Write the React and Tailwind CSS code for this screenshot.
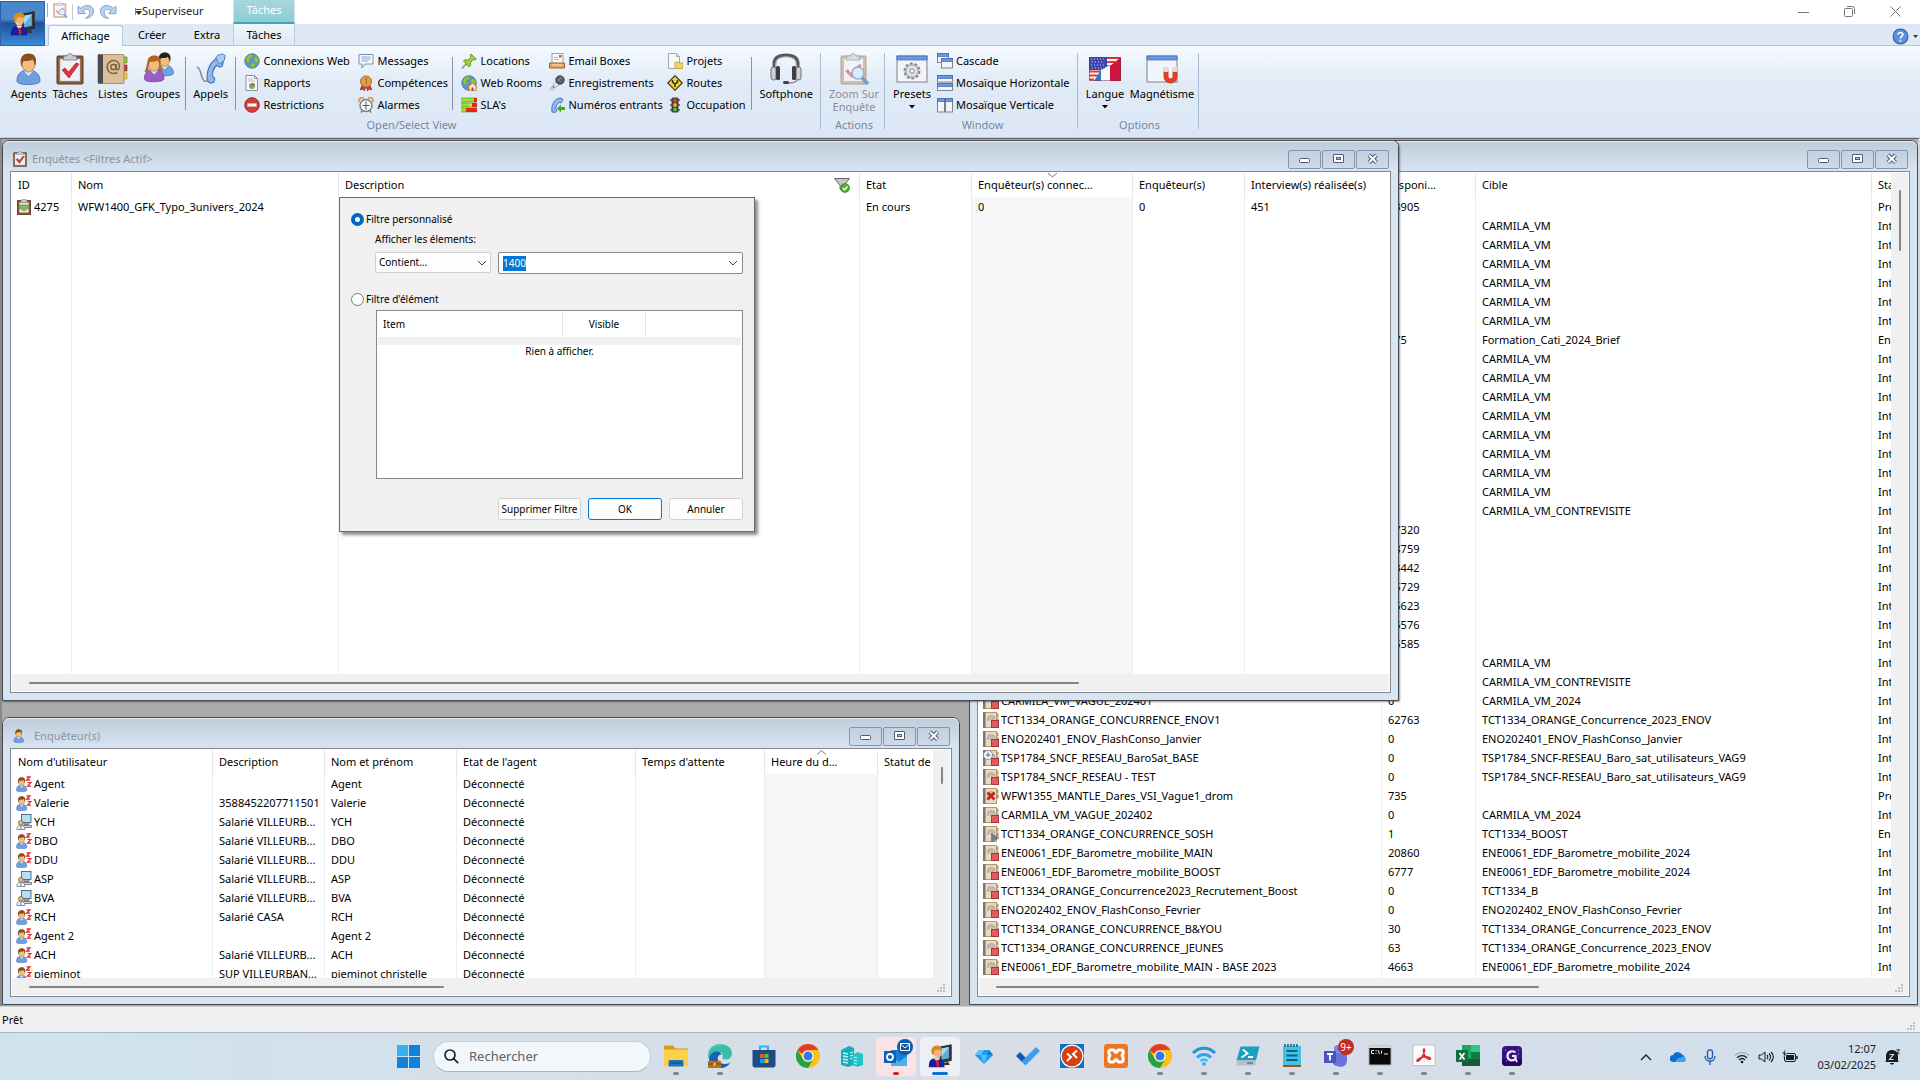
import React, { useState } from 'react';

/* ---------- Icons ---------- */

function Svg({ size = 16, box = 16, className = "", children }) {
  return (
    <svg width={size} height={size} viewBox={`0 0 ${box} ${box}`} fill="none" className={`shrink-0 ${className}`} aria-hidden="true">
      {children}
    </svg>
  );
}

function PersonShape({ body = "#6f9fe0", dark = "#3c68ae", hair = "#8a4f1a" }) {
  return (
    <>
      <path d="M4 28c0-7 4-11 11-11s12 4 12 11c0 2-5 3.500-12 3.500S4 30 4 28z" fill={body} stroke={dark} strokeWidth="0.8" />
      <path d="M11 18l4.500 5L20 18z" fill="#dce9fb" />
      <path d="M8.500 9c0-5 3-7.500 7-7.500s7 2.500 7 7.500-3 10-7 10-7-5-7-10z" fill="#f0bd7c" stroke="#a86b2a" strokeWidth="0.7" />
      <path d="M7.800 11C6.500 3.500 11 .5 15.500.5c5 0 8.500 3 7.200 9.500-.4 2-1.200 2.500-1.200 2.500 0-3-1-5-2-6-3 2-7 1.500-8.500 1.500-1.500 1-1.700 2-1.700 5.500 0 0-1.200-.5-1.500-2z" fill={hair} />
    </>
  );
}

const AgentIcon = ({ size = 32 }) => <Svg size={size} box={32}><PersonShape /></Svg>;

const ClipboardIcon = ({ size = 32 }) => (
  <Svg size={size} box={32}>
    <rect x="3" y="3" width="26" height="28" rx="1" fill="#8c5a35" stroke="#5d3a20" />
    <rect x="6" y="6" width="20" height="22" fill="#eef0f4" stroke="#b9bcc4" strokeWidth="0.6" />
    <path d="M10 3h3c0-3 6-3 6 0h3l1 4H9z" fill="#c9ccd1" stroke="#777b82" strokeWidth="0.8" />
    <path d="M8 17l3-2 3.500 4L22 10l3 1-10 14z" fill="#d8363c" stroke="#8e1a20" strokeWidth="0.6" />
  </Svg>
);

const BookIcon = () => (
  <Svg size={32} box={32}>
    <rect x="24" y="4" width="6" height="6" fill="#8ec63a" stroke="#4f7c14" strokeWidth="0.6" />
    <rect x="24" y="12" width="6" height="6" fill="#d23a3a" stroke="#861a1a" strokeWidth="0.6" />
    <rect x="24" y="20" width="6" height="6" fill="#f3cf48" stroke="#a9851a" strokeWidth="0.6" />
    <rect x="1" y="1.500" width="26" height="29" rx="1" fill="#dcbf98" stroke="#9a7c55" strokeWidth="0.8" />
    <rect x="1" y="1.500" width="5" height="29" fill="#4b4b4d" />
    <circle cx="16.500" cy="14" r="2.600" stroke="#7d6040" strokeWidth="1.500" />
    <path d="M19.200 11v4.300c0 2.200 3.300 2 3.300-1.300 0-4-2.700-6.500-6-6.500s-6.300 2.700-6.300 6.500 2.800 6.500 6.300 6.500c1.500 0 2.700-.3 3.800-1" stroke="#7d6040" strokeWidth="1.500" />
  </Svg>
);

const GroupIcon = () => (
  <Svg size={34} box={34}>
    <g transform="translate(12 0) scale(.76)"><PersonShape body="#6f9fe0" hair="#222" /></g>
    <g transform="translate(0 3) scale(.85)">
      <PersonShape body="#9a5cc6" dark="#6a3392" hair="#b5641e" />
      <path d="M8 8c-2 5-2 9-4 12 3 0 5-1 5-3zM22 8c2 5 1 9 4 12-3 0-5-1-5-3z" fill="#b5641e" />
    </g>
  </Svg>
);

const CallIcon = () => (
  <Svg size={32} box={34}>
    <path d="M2 15c5 0 4 15 9 15h7" stroke="#8e9196" strokeWidth="1.800" />
    <path d="M13 29C12 17 17 8 25 5l5 4-1 5-3 1-3-2c-3 3-5 8-4 12l2 2-1 4-4 1z" fill="#8db9ee" stroke="#4272b6" strokeWidth="1.200" />
    <path d="M22 5c2-4 9-5 10-2l-1 5-5 4z" fill="#a9cdf5" stroke="#4272b6" strokeWidth="1" />
  </Svg>
);

const HeadsetIcon = () => (
  <Svg size={32} box={32}>
    <path d="M4 18V11C4 4 9 2 16 2s12 2 12 9v7" stroke="#55585d" strokeWidth="3" />
    <path d="M6 15V11c0-5 4-7 10-7s10 2 10 7v4" stroke="#a9acb0" strokeWidth="1" />
    <rect x="1" y="14" width="5" height="13" rx="2.500" fill="#cfd1d4" stroke="#6b6e72" />
    <rect x="6" y="13" width="4" height="14" rx="1.500" fill="#3c3e42" />
    <rect x="26" y="14" width="5" height="13" rx="2.500" fill="#cfd1d4" stroke="#6b6e72" />
    <rect x="22" y="13" width="4" height="14" rx="1.500" fill="#3c3e42" />
    <path d="M27 27c-1 3-5 3-9 3" stroke="#888b90" strokeWidth="1.400" />
    <rect x="13" y="28" width="6" height="3" rx="1.500" fill="#3f4145" />
  </Svg>
);

const ZoomSurveyIcon = ({ size = 32 }) => (
  <Svg size={size} box={32} className="opacity-70">
    <rect x="3" y="3" width="25" height="28" rx="1" fill="#c9ab8c" stroke="#9d8166" />
    <rect x="6" y="6" width="19" height="22" fill="#f3f4f7" />
    <path d="M9 3h3c0-3 6-3 6 0h3l1 4H8z" fill="#cfd2d6" stroke="#85888d" strokeWidth="0.8" />
    <path d="M7 18l3-2 3 4 8-9 3 1-10 13z" fill="#e0666a" />
    <circle cx="20" cy="20" r="6" fill="#d5eafc" stroke="#7691ac" strokeWidth="1.600" />
    <path d="M24 25l6 6" stroke="#4f7db5" strokeWidth="3.500" />
  </Svg>
);

function WindowShape({ x, y, w, h, bar = 3 }) {
  return (
    <>
      <rect x={x} y={y} width={w} height={h} fill="#f2f4f8" stroke="#6f7682" strokeWidth="0.9" />
      <rect x={x} y={y} width={w} height={bar} fill="#6a98e2" stroke="#3c68b4" strokeWidth="0.7" />
    </>
  );
}

const PresetsIcon = () => (
  <Svg size={32} box={32}>
    <WindowShape x={1} y={3} w={30} h={26} bar={4} />
    <circle cx="16" cy="18" r="7.500" stroke="#858585" strokeWidth="2" strokeDasharray="2.900 1.810" />
    <circle cx="16" cy="18" r="6.200" fill="#e1e3e6" stroke="#8c8f94" />
    <circle cx="16" cy="18" r="2.200" fill="#fff" stroke="#7c7f84" />
  </Svg>
);

const FlagIcon = () => (
  <Svg size={32} box={32}>
    <rect y="4" width="32" height="24" fill="#f4f4f6" />
    <path d="M17 5h14M17 9h9M0 18.500h12M0 22.500h9M0 26.500h5M17 13h5" stroke="#e23b3b" strokeWidth="2.200" />
    <rect y="4" width="18" height="13" fill="#3d47a8" />
    <path d="M2 6h14M3 9h12M2 12h14M3 15h12" stroke="#c9cdf2" strokeWidth="1" strokeDasharray="1 2" />
    <path d="M5 28L12 17v11z" fill="#2a77c6" />
    <path d="M12 17l9-5v16h-9z" fill="#f6f7fa" />
    <path d="M21 13L32 4v24H21z" fill="#cb1740" />
    <rect x="0.500" y="4.500" width="31" height="23" stroke="#7a2a40" strokeOpacity=".5" />
  </Svg>
);

const MagnetIcon = () => (
  <Svg size={32} box={32}>
    <WindowShape x={1} y={3} w={30} h={26} bar={4} />
    <path d="M20 17v6.500a4.500 4.500 0 009 0V17" stroke="#d8421c" strokeWidth="5" />
    <path d="M20 14v5M29 14v5" stroke="#d9dbe0" strokeWidth="5" />
  </Svg>
);

const GlobeShape = () => (
  <>
    <circle cx="8" cy="8" r="7.300" fill="#5b93dc" stroke="#4f6f96" strokeWidth="0.700" />
    <path d="M2 5c2-4 6-4 7-3L8 4.500 5.500 6 6 9l-2 1-2-2zM9.500 5l3-2 2.500 4-1 3-2.500-1L10 7.500zM6.500 11l3-1.500 2 2-1.500 3.500-2.500-.5z" fill="#8fc83c" stroke="#568a1e" strokeWidth="0.400" />
  </>
);

const smallIcons = {
  globe: <GlobeShape />,
  report: (
    <>
      <path d="M2 .5h8.500l3 3v12H2z" fill="#f7f8fa" stroke="#8e939b" />
      <path d="M10.500.5v3h3" stroke="#8e939b" />
      <path d="M4 4h5M4 6h7" stroke="#b4b9c0" />
      <circle cx="8" cy="11" r="3" fill="#5a9de0" />
      <path d="M8 11V8a3 3 0 013 3z" fill="#e2503a" />
      <path d="M8 11h3a3 3 0 01-3 3z" fill="#8ac43a" />
    </>
  ),
  deny: (
    <>
      <circle cx="8" cy="8" r="7.300" fill="#d2403c" stroke="#8e2522" strokeWidth="0.900" />
      <rect x="3.500" y="6.500" width="9" height="3" fill="#fff" />
    </>
  ),
  message: (
    <>
      <path d="M1 1.500h14v9.500H7l-3 4v-4H1z" fill="#f5f9ff" stroke="#7d8ea5" />
      <path d="M3.500 4h9M3.500 6h9M3.500 8h7" stroke="#7ea8dc" />
    </>
  ),
  medal: (
    <>
      <path d="M4.500 9L2 15l3-.8L6.500 16 8 11l1.500 5 1.500-1.800 3 .8-2.500-6z" fill="#d03434" stroke="#8e1c1c" strokeWidth="0.500" />
      <circle cx="8" cy="6.500" r="5.500" fill="#dfa04a" stroke="#a46c22" />
      <path d="M7 4.500l1.200-.8v5.600" stroke="#a46c22" strokeWidth="1.200" />
    </>
  ),
  alarm: (
    <>
      <path d="M1 5a3.500 3.500 0 015-4M15 5a3.500 3.500 0 00-5-4" stroke="#dca53c" strokeWidth="2" />
      <path d="M3 15.500l1.500-2M13 15.500l-1.500-2" stroke="#777" strokeWidth="1.400" />
      <circle cx="8" cy="8.500" r="6" fill="#f6f8fb" stroke="#767b84" strokeWidth="1.400" />
      <path d="M8 4.500v8M4.500 8.500h7" stroke="#555" />
    </>
  ),
  pin: (
    <>
      <path d="M6 10L.8 15.500" stroke="#888" strokeWidth="1.400" />
      <path d="M10 1l5.300 5-2 1-1.300-.3-2.500 3 .2 3L8 14 2.500 7.800l1.500-1 3 .3 2.800-2.800L9 3z" fill="#9bd238" stroke="#54861a" strokeWidth="0.800" />
    </>
  ),
  webroom: (
    <>
      <GlobeShape />
      <path d="M7 12l4.500-4 4.500 4-1 .5V16H8v-3.500z" fill="#f4e9dc" stroke="#d86a20" />
      <rect x="10.500" y="12.500" width="2" height="3.500" fill="#8e5422" />
    </>
  ),
  sla: (
    <>
      <path d="M0 3h13M0 8h8M0 13h5" stroke="#9be22a" strokeWidth="4" />
      <path d="M13 3h3M11 8h5M5 13h11" stroke="#f0201c" strokeWidth="4" />
      <path d="M8 8h3" stroke="#ffd21c" strokeWidth="4" />
      <path d="M.3 1h15.400M.3 5h15.400M.3 6h15.400M.3 10h15.400M.3 11h15.400M.3 15h15.400" stroke="#39791a" strokeWidth="0.500" />
    </>
  ),
  email: (
    <>
      <rect x="3" y="0.500" width="11" height="10" fill="#fafbfd" stroke="#9a9fa8" />
      <path d="M5 4.500h4M5 6.500h5" stroke="#b9bec6" />
      <rect x="10" y="2" width="2.500" height="2.500" fill="#d84444" />
      <path d="M.5 10h15v5H.5z" fill="#e2a368" stroke="#9c622c" />
      <path d="M3 12h10" stroke="#fbe2c8" />
    </>
  ),
  mic: (
    <>
      <path d="M8.500 5.500l3 3L3 15l-2-1z" fill="#ececf0" stroke="#84888f" strokeWidth="0.700" />
      <circle cx="11" cy="5" r="4.300" fill="#55585e" stroke="#303237" strokeWidth="0.700" />
      <path d="M8.500 3.500l4 4M10.500 2l4 4M8.500 6.500l5-5" stroke="#a5a8ad" strokeWidth="0.600" />
      <circle cx="4.500" cy="12" r="0.900" fill="#d83030" />
    </>
  ),
  incoming: (
    <>
      <path d="M3 15C2 9 4 4 9 1.500l3.500-.5 1.500 2-2 3-2-.5C7.500 7.500 6.500 10 7 12l1 1-1.500 2.500z" fill="#8db9ee" stroke="#4272b6" strokeWidth="0.900" />
      <path d="M8 11.500l4-4v2.500h4v3h-4v2.500z" fill="#49a81e" />
    </>
  ),
  project: (
    <>
      <path d="M1.500.5h8l3 3v12h-11z" fill="#f7f8fa" stroke="#a2a7af" />
      <path d="M9.500.5v3h3" stroke="#a2a7af" />
      <path d="M8 9h3l1 1h4v5.500H8z" fill="#f6d264" stroke="#c29a30" strokeWidth="0.700" />
    </>
  ),
  route: (
    <>
      <path d="M8 .7L15.300 8 8 15.300.7 8z" fill="#f6cf30" stroke="#2e2a12" strokeWidth="1.100" />
      <path d="M5.500 5v2.200L8 9l2.500-1.800V5M8 9v3" stroke="#2e2a12" strokeWidth="1.500" />
    </>
  ),
  traffic: (
    <>
      <path d="M3 3h10M3 8h10M3 13h10" stroke="#555" strokeWidth="1.600" />
      <rect x="4.500" y="0.500" width="7" height="15" rx="1.500" fill="#3e4043" />
      <circle cx="8" cy="3.500" r="1.900" fill="#ee3a28" />
      <circle cx="8" cy="8" r="1.900" fill="#f0b42a" />
      <circle cx="8" cy="12.500" r="1.900" fill="#4fc43a" />
    </>
  ),
  cascade: (
    <>
      <WindowShape x={0.500} y={0.500} w={11} h={9} />
      <WindowShape x={4.500} y={5.500} w={11} h={9.500} />
    </>
  ),
  horizontal: (
    <>
      <WindowShape x={0.500} y={0.500} w={15} h={6.500} />
      <WindowShape x={0.500} y={8.500} w={15} h={7} />
    </>
  ),
  vertical: (
    <>
      <WindowShape x={0.500} y={1.500} w={7} h={13.500} />
      <WindowShape x={8.500} y={1.500} w={7} h={13.500} />
    </>
  ),
};

// Rows of the survey list: a small address book with a status mark on top
function ListIcon({ status = "stop" }) {
  return (
    <Svg>
      <rect x="13" y="1.500" width="2.500" height="4" fill="#8cb84a" />
      <rect x="13" y="6.500" width="2.500" height="4" fill="#d86a5a" />
      <rect x="1" y="0.500" width="12.500" height="15" fill="#ead9bd" stroke="#b39a74" />
      <rect x="0" y="0" width="2.500" height="16" fill="#77777a" />
      <path d="M5 9V6.500a3.300 3.300 0 016.500 0v1" stroke="#a39d94" strokeWidth="1.200" />
      <circle cx="8.300" cy="6.800" r="1.300" stroke="#a39d94" />
      {status === "stop" && <rect x="8.500" y="8.500" width="7" height="7" fill="#dc5f60" stroke="#b03238" />}
      {status === "play" && <path d="M8.500 7.500l7.500 4.500-7.500 4z" fill="#7b7b7b" stroke="#5c5c5c" strokeWidth="0.500" />}
      {status === "error" && <path d="M4.500 4.500l7 7M11.500 4.500l-7 7" stroke="#c8201c" strokeWidth="2.800" />}
      {status === "clock" && (
        <>
          <rect x="8.500" y="8.500" width="7" height="7" fill="#dc5f60" stroke="#b03238" />
          <circle cx="5" cy="5" r="4.500" fill="#f3f6fb" stroke="#8a93a6" />
          <path d="M5 2.500V5h2.500M5 5v2M3 5h2" stroke="#555" strokeWidth="0.900" />
        </>
      )}
    </Svg>
  );
}

const AwayIcon = () => (
  <Svg>
    <g transform="translate(-1.500 1) scale(.46 .47)"><PersonShape /></g>
    <path d="M10.500.8h3.500l-3.500 3.400H14M11.500 6.500H15l-3.500 3.700H15" stroke="#e8202c" strokeWidth="1.200" />
  </Svg>
);

const DeskIcon = () => (
  <Svg>
    <rect x="5.500" y="0.500" width="9.500" height="8" fill="#b4e0f6" stroke="#3e4f63" strokeWidth="0.800" />
    <path d="M8 9h5v1.500H8zM6 11.500h9.500v2H6z" fill="#d6dade" stroke="#5d6670" strokeWidth="0.800" />
    <circle cx="4.800" cy="8.800" r="2.300" fill="#f0bd7c" stroke="#8a4f1a" strokeWidth="0.800" />
    <path d="M.8 15.500c0-3 1.500-4.200 4-4.200s4 1.200 4 4.200z" fill="#f4f6f9" stroke="#6e7680" strokeWidth="0.800" />
    <path d="M4.800 12v3" stroke="#3f78c8" />
  </Svg>
);

const SurveyRowIcon = () => (
  <Svg>
    <rect x="1.500" y="1.500" width="13" height="14" fill="#8c5a35" stroke="#6a4426" />
    <rect x="3.500" y="3.500" width="9" height="10" fill="#eef0f0" />
    <path d="M5 1h1.500c0-1.300 3-1.300 3 0H11v2.500H5z" fill="#c4c7cc" stroke="#777b82" strokeWidth="0.600" />
    <path d="M4 6h8c.5 2.500-.3 4.500-2.500 5L8 12l-1.500-1C4.300 10.500 3.500 8.500 4 6z" fill="#83bf5e" stroke="#4c8430" strokeWidth="0.700" />
  </Svg>
);

const FunnelIcon = () => (
  <Svg>
    <path d="M.5 1.500h15L10 8.500V14l-4-2V8.500z" fill="#c3c7cb" stroke="#63676c" />
    <circle cx="11" cy="11" r="4.500" fill="#4fae2a" stroke="#2f7a14" strokeWidth="0.600" />
    <path d="M8.800 11l1.700 1.700 3-3.300" stroke="#fff" strokeWidth="1.500" />
  </Svg>
);

function SupervisorIcon({ size = 24 }) {
  return (
    <Svg size={size} box={32}>
      <path d="M16 4l15-3v21l-15 3z" fill="#33373c" stroke="#15171a" />
      <path d="M18 6l10-2v15l-10 2z" fill="#5fb0d8" />
      <path d="M18 6l10-2-10 13z" fill="#a5dcf2" />
      <path d="M22 25l5-1 2 4h-9z" fill="#33373c" />
      <path d="M1 31c0-8 2-12 10-12s11 4 11 12z" fill="#16209c" />
      <path d="M8 19l4 5 4-5z" fill="#f3f5fa" />
      <path d="M11 21h3l1 9h-4z" fill="#d8222a" />
      <path d="M6 11c0-4 2-7 6-7s6 3 6 7-2 8-6 8-6-4-6-8z" fill="#f3b676" />
      <path d="M5 13C3 6 7 2 12 2s7 3 6.500 7C15 8 12 7 10 8c-2 1-2 3-2 7z" fill="#d98a1e" />
      <path d="M7 14c1 3 3 3 5 3" stroke="#e8e8ec" strokeWidth="1.200" />
    </Svg>
  );
}

const Chevron = ({ className = "" }) => (
  <Svg size={10} box={10} className={className}><path d="M1 3l4 4 4-4" stroke="#444" /></Svg>
);

const SizeGrip = ({ className = "" }) => (
  <Svg size={9} box={9} className={className}>
    <path d="M6 0h2v2H6zM3 3h2v2H3zM6 3h2v2H6zM0 6h2v2H0zM3 6h2v2H3zM6 6h2v2H6z" fill="#bcbcbc" />
  </Svg>
);

/* ---------- Header and ribbon ---------- */

function TitleArea() {
  return (
    <header className="flex bg-white">
      <button aria-label="Menu" className="mt-px flex w-[45px] items-center justify-center border border-[#2c5fae] bg-linear-to-b from-[#4a87ca] from-40% via-[#1d5298] via-50% to-[#3d8bd6]">
        <SupervisorIcon size={25} />
      </button>
      <div className="flex grow flex-col">
        <div className="flex h-6">
          <div className="flex w-[188px] items-center">
            <span className="ml-0.5 -mt-1 h-[14px] w-px bg-[#a8a8a8]" />
            <button aria-label="Zoom" className="-mt-1 ml-1"><ZoomSurveyIcon size={16} /></button>
            <span className="ml-1 h-4 w-px bg-[#c8c8c8]" />
            <button aria-label="Annuler la saisie" className="-mt-0.5 ml-1">
              <Svg size={17}><path d="M1 3v7h7L5.500 7.500C9 4.500 12 6 12 9c0 2.500-2 4-4 5.500 5-.5 7.500-3 7.500-7C15.500 2 8.500.5 3.500 5z" fill="#b8d2f2" stroke="#7ba1d4" strokeWidth="0.900" /></Svg>
            </button>
            <button aria-label="Rétablir" className="-mt-0.5 ml-1.5">
              <Svg size={17}><path d="M15 3v7H8l2.500-2.500C7 4.500 4 6 4 9c0 2.500 2 4 4 5.500C3 14 .5 11.500.5 7.500.5 2 7.500.5 12.500 5z" fill="#b8d2f2" stroke="#7ba1d4" strokeWidth="0.900" /></Svg>
            </button>
            <button aria-label="Personnaliser" className="-mt-0.5 ml-[18px]">
              <Svg size={7} box={7}><path d="M.5 0v7" stroke="#555" strokeWidth="0.700" /><path d="M1 1.500h5.500M1 3.500h5.500L3.800 6.500z" stroke="#222" strokeWidth="0.800" fill="#222" /></Svg>
            </button>
            <h1 className="-mt-0.5 text-[11px] text-[#222]">Superviseur</h1>
          </div>
          <div className="w-[62px] border-x border-b-2 border-x-[#cfe4ea] border-b-[#3da9b8] bg-linear-to-b from-[#a4d8dc] to-[#8fcdd4] pt-0.5 text-center text-[11px] text-white">Tâches</div>
          <div className="mr-0.5 ml-auto flex h-[22px] items-center text-[#777]">
            <button aria-label="Réduire" className="flex w-[46px] justify-center"><Svg size={11} box={11}><path d="M0 6.500h11" stroke="currentColor" /></Svg></button>
            <button aria-label="Restaurer" className="flex w-[46px] justify-center"><Svg size={11} box={11}><rect x="0.500" y="2.500" width="8" height="8" rx="1" stroke="currentColor" /><path d="M3 .5h5.500a2 2 0 012 2V8" stroke="currentColor" /></Svg></button>
            <button aria-label="Fermer" className="flex w-[46px] justify-center"><Svg size={11} box={11}><path d="M.5.500l10 10M10.500.500l-10 10" stroke="currentColor" /></Svg></button>
          </div>
        </div>
        <nav className="flex h-[22px] items-end border-b border-[#b4c7db] bg-[#dfe9f5] text-[11px]">
          <button className="-mb-px ml-[3px] h-[21px] w-[75px] rounded-t-[3px] border border-b-0 border-[#b4c7db] bg-[#f6fafe]">Affichage</button>
          <button className="h-[21px] w-[58px] pt-0.5">Créer</button>
          <button className="h-[21px] w-[52px] pt-0.5">Extra</button>
          <button className="h-[21px] w-[62px] border-x border-[#b9cbdc] bg-linear-to-b from-[#edf6fa] to-[#dfe9f5] pt-0.5">Tâches</button>
          <button aria-label="Aide" className="mr-0.5 ml-auto flex items-center gap-1">
            <Svg size={17}>
              <circle cx="8" cy="8" r="7" fill="#5b8fdc" stroke="#2d5ba6" />
              <path d="M5.800 6.200C6 3.500 10.300 3.700 10.200 6.200 10 7.800 8 7.700 8 9.800M8 11v1.600" stroke="#fff" strokeWidth="1.500" />
            </Svg>
            <Svg size={5} box={5}><path d="M0 1h5L2.500 4z" fill="#333" /></Svg>
          </button>
        </nav>
      </div>
    </header>
  );
}

function BigButton({ icon, label, width, arrow, disabled }) {
  return (
    <button disabled={disabled} className={`flex flex-col items-center pt-[3px] ${width} ${disabled ? "text-[#8b8f98]" : ""}`}>
      <span className="flex h-[32px] items-center">{icon}</span>
      <span className="mt-0.5 text-center leading-[13px]">{label}</span>
      {arrow && <Svg size={6} box={6} className="mt-1"><path d="M0 1h6L3 4.500z" fill="#000" /></Svg>}
    </button>
  );
}

function SmallColumn({ items, width }) {
  return (
    <div className={`flex shrink-0 flex-col ${width}`}>
      {items.map(([icon, label]) => (
        <button key={label} className="flex h-[22px] items-center gap-[3px] whitespace-nowrap">
          <Svg>{smallIcons[icon]}</Svg>
          {label}
        </button>
      ))}
    </div>
  );
}

const InnerSep = () => <span className="mt-[7px] h-[53px] w-px shrink-0 bg-[#8b94a3]" />;

function RibbonGroup({ title, width, children }) {
  return (
    <>
      <section className={`flex shrink-0 flex-col pt-1 ${width}`}>
        <div className="flex h-[67px]">{children}</div>
        <h2 className="pl-[3px] text-center leading-4 text-[#7587a0]">{title}</h2>
      </section>
      <span className="mt-[7px] h-[76px] w-px shrink-0 bg-[#a9bbd2]" />
    </>
  );
}

function Ribbon() {
  return (
    <div className="flex h-[92px] border-b border-[#c3cfdf] bg-linear-to-b from-[#f5fafe] via-[#e1ebf7] via-40% to-[#dce7f6] text-[11px]">
      <RibbonGroup title="Open/Select View" width="w-[820px]">
        <BigButton icon={<AgentIcon />} label="Agents" width="ml-2 w-[42px]" />
        <BigButton icon={<ClipboardIcon />} label="Tâches" width="w-[41px]" />
        <BigButton icon={<BookIcon />} label="Listes" width="w-[45px]" />
        <BigButton icon={<GroupIcon />} label="Groupes" width="mr-1 w-[46px]" />
        <InnerSep />
        <BigButton icon={<CallIcon />} label="Appels" width="w-[50px]" />
        <InnerSep />
        <SmallColumn width="ml-2 w-[114px]" items={[["globe", "Connexions Web"], ["report", "Rapports"], ["deny", "Restrictions"]]} />
        <SmallColumn width="w-[94px]" items={[["message", "Messages"], ["medal", "Compétences"], ["alarm", "Alarmes"]]} />
        <InnerSep />
        <SmallColumn width="ml-2 w-[88px]" items={[["pin", "Locations"], ["webroom", "Web Rooms"], ["sla", "SLA's"]]} />
        <SmallColumn width="w-[118px]" items={[["email", "Email Boxes"], ["mic", "Enregistrements"], ["incoming", "Numéros entrants"]]} />
        <SmallColumn width="w-[84px]" items={[["project", "Projets"], ["route", "Routes"], ["traffic", "Occupation"]]} />
        <InnerSep />
        <BigButton icon={<HeadsetIcon />} label="Softphone" width="w-[68px]" />
      </RibbonGroup>
      <RibbonGroup title="Actions" width="w-[63px]">
        <BigButton disabled icon={<ZoomSurveyIcon />} label={<>Zoom Sur<br />Enquête</>} width="w-full pl-[3px]" />
      </RibbonGroup>
      <RibbonGroup title="Window" width="w-[192px]">
        <BigButton arrow icon={<PresetsIcon />} label="Presets" width="w-[52px] pl-0.5" />
        <SmallColumn width="" items={[["cascade", "Cascade"], ["horizontal", "Mosaïque Horizontale"], ["vertical", "Mosaïque Verticale"]]} />
      </RibbonGroup>
      <RibbonGroup title="Options" width="w-[120px]">
        <BigButton arrow icon={<FlagIcon />} label="Langue" width="ml-[5px] w-[44px]" />
        <BigButton icon={<MagnetIcon />} label="Magnétisme" width="w-[70px]" />
      </RibbonGroup>
    </div>
  );
}

/* ---------- Child windows ---------- */

function WindowButtons() {
  const button = "flex h-[19px] w-[33px] items-center justify-center rounded-[2px] border border-[#8494b0] bg-linear-to-b from-[#c3d0df] to-[#cddaea]";
  return (
    <div className="ml-auto flex gap-px">
      <button aria-label="Réduire" className={button}>
        <Svg size={12} box={12}><rect x="0.500" y="5.500" width="10" height="4" rx="1" fill="#fff" stroke="#555b6b" /></Svg>
      </button>
      <button aria-label="Agrandir" className={button}>
        <Svg size={12} box={12}><rect x="0.500" y="1.500" width="10" height="8" rx="0.500" fill="#fff" stroke="#555b6b" /><rect x="3.500" y="4.500" width="4" height="2" fill="#b8c6d8" stroke="#555b6b" /></Svg>
      </button>
      <button aria-label="Fermer" className={button}>
        <Svg size={12} box={12}>
          <path d="M2 2l7.500 7.500M9.500 2L2 9.500" stroke="#555b6b" strokeWidth="4" />
          <path d="M2.200 2.200l7.100 7.100M9.300 2.200l-7.100 7.100" stroke="#fff" strokeWidth="2" />
        </Svg>
      </button>
    </div>
  );
}

function ChildWindow({ icon, title, className, children }) {
  return (
    <section className={`absolute flex flex-col rounded-t-[7px] border border-[#474a50] bg-[#d7e4f2] px-[7px] pb-[7px] ${className}`}>
      <div className="-mx-[7px] flex h-[30px] shrink-0 items-center rounded-t-[6px] border-t border-[#e8f0f8] bg-linear-to-b from-[#bfcddb] to-[#d7e4f2] px-[9px] pt-[5px]">
        {icon}
        <h2 className="ml-1 text-[11px] text-[#8d949c]">{title}</h2>
        <WindowButtons />
      </div>
      <div className="flex min-h-0 grow flex-col overflow-hidden border border-[#828790] bg-white p-px">
        {children}
      </div>
    </section>
  );
}

function HorizontalScroll({ thumb, grip }) {
  return (
    <div className="flex h-[17px] shrink-0 items-center justify-between bg-[#f0f0f0] pr-1 pl-[17px]">
      <span className={`h-0.5 rounded-full bg-[#858585] ${thumb}`} />
      {grip && <SizeGrip className="mt-1" />}
    </div>
  );
}

function VerticalScroll({ thumb }) {
  return (
    <div className="flex w-[17px] shrink-0 justify-center bg-[#f0f0f0] pt-[17px]">
      <span className={`w-0.5 rounded-full bg-[#858585] ${thumb}`} />
    </div>
  );
}

// columns: [{ title, width, sort, filter }]
function DataTable({ label, columns, rows }) {
  return (
    <div className="min-w-0 grow overflow-hidden">
      <table aria-label={label} className="h-full w-full table-fixed border-separate border-spacing-0 text-left text-[11px] leading-[18px] whitespace-nowrap">
        <colgroup>
          {columns.map((c, i) => <col key={i} className={c.width} />)}
        </colgroup>
        <thead>
          <tr className="h-6">
            {columns.map((c, i) => (
              <th key={i} className="relative overflow-hidden border-r border-[#e5e5e5] pt-0 pb-px pl-1.5 font-normal last:border-r-0">
                {c.sort && (
                  <Svg size={9} box={9} className="absolute top-0 left-1/2 -ml-1">
                    <path d={c.sort === "down" ? "M0 0l4.500 4L9 0" : "M0 4.500L4.500.500 9 4.500"} stroke="#777" />
                  </Svg>
                )}
                <span className="flex items-center justify-between">{c.title}{c.filter && <span className="pr-[9px]"><FunnelIcon /></span>}</span>
              </th>
            ))}
          </tr>
        </thead>
        <tbody>
          {rows.map((row, r) => (
            <tr key={r} className="h-[19px]">
              {row.map((cell, i) => (
                <td key={i} className={`overflow-hidden border-r border-[#e8f0fb] py-0 last:border-r-0 ${i === 0 && Array.isArray(cell) ? "pl-1" : "pl-1.5"} ${columns[i].sort ? "bg-[#f6f6f6]" : ""}`}>
                  {Array.isArray(cell)
                    ? <span className="flex h-[18px] items-center gap-0.5">{cell[0]}{cell[1]}</span>
                    : cell}
                </td>
              ))}
            </tr>
          ))}
          <tr>
            {columns.map((c, i) => (
              <td key={i} className={`border-r border-[#e8f0fb] p-0 last:border-r-0 ${c.sort ? "bg-[#f6f6f6]" : ""}`} />
            ))}
          </tr>
        </tbody>
      </table>
    </div>
  );
}

const surveyColumns = [
  { title: "ID", width: "w-[60px]" },
  { title: "Nom", width: "w-[267px]" },
  { title: "Description", width: "w-[521px]", filter: true },
  { title: "Etat", width: "w-[112px]" },
  { title: "Enquêteur(s) connec...", width: "w-[161px]", sort: "down" },
  { title: "Enquêteur(s)", width: "w-[112px]" },
  { title: "Interview(s) réalisée(s)", width: "" },
];
const surveyRows = [
  [[<SurveyRowIcon key="i" />, "4275"], "WFW1400_GFK_Typo_3univers_2024", "", "En cours", "0", "0", "451"],
];

const agentColumns = [
  { title: "Nom d'utilisateur", width: "w-[201px]" },
  { title: "Description", width: "w-[112px]" },
  { title: "Nom et prénom", width: "w-[132px]" },
  { title: "Etat de l'agent", width: "w-[179px]" },
  { title: "Temps d'attente", width: "w-[129px]" },
  { title: "Heure du d...", width: "w-[113px]", sort: "up" },
  { title: "Statut de", width: "" },
];
const agents = [
  ["Agent", "", "Agent"],
  ["Valerie", "3588452207711501", "Valerie"],
  ["YCH", "Salarié VILLEURB...", "YCH", true],
  ["DBO", "Salarié VILLEURB...", "DBO"],
  ["DDU", "Salarié VILLEURB...", "DDU"],
  ["ASP", "Salarié VILLEURB...", "ASP", true],
  ["BVA", "Salarié VILLEURB...", "BVA", true],
  ["RCH", "Salarié CASA", "RCH"],
  ["Agent 2", "", "Agent 2"],
  ["ACH", "Salarié VILLEURB...", "ACH"],
  ["pieminot", "SUP VILLEURBAN...", "pieminot christelle"],
];
const agentRows = agents.map(([login, description, name, desk]) => [
  [desk ? <DeskIcon key="i" /> : <AwayIcon key="i" />, login], description, name, "Déconnecté", "", "", "",
]);

const listColumns = [
  { title: "", width: "w-[403px]" },
  { title: "Disponi...", width: "w-[94px]" },
  { title: "Cible", width: "w-[396px]" },
  { title: "Sta", width: "" },
];
const carmila = (n) => Array.from({ length: n }, () => ["", "", "CARMILA_VM", "Int"]);
const lists = [
  ["", "13905", "", "Pré"],
  ...carmila(6),
  ["", "175", "Formation_Cati_2024_Brief", "En"],
  ...carmila(8),
  ["", "", "CARMILA_VM_CONTREVISITE", "Int"],
  ...["17320", "18759", "13442", "15729", "15623", "15576", "15585"].map((n) => ["", n, "", "Int"]),
  ...carmila(1),
  ["", "", "CARMILA_VM_CONTREVISITE", "Int"],
  ["CARMILA_VM_VAGUE_202401", "0", "CARMILA_VM_2024", "Int"],
  ["TCT1334_ORANGE_CONCURRENCE_ENOV1", "62763", "TCT1334_ORANGE_Concurrence_2023_ENOV", "Int"],
  ["ENO202401_ENOV_FlashConso_Janvier", "0", "ENO202401_ENOV_FlashConso_Janvier", "Int"],
  ["TSP1784_SNCF_RESEAU_BaroSat_BASE", "0", "TSP1784_SNCF-RESEAU_Baro_sat_utilisateurs_VAG9", "Int", "clock"],
  ["TSP1784_SNCF_RESEAU - TEST", "0", "TSP1784_SNCF-RESEAU_Baro_sat_utilisateurs_VAG9", "Int"],
  ["WFW1355_MANTLE_Dares_VSI_Vague1_drom", "735", "", "Pré", "error"],
  ["CARMILA_VM_VAGUE_202402", "0", "CARMILA_VM_2024", "Int"],
  ["TCT1334_ORANGE_CONCURRENCE_SOSH", "1", "TCT1334_BOOST", "En", "play"],
  ["ENE0061_EDF_Barometre_mobilite_MAIN", "20860", "ENE0061_EDF_Barometre_mobilite_2024", "Int"],
  ["ENE0061_EDF_Barometre_mobilite_BOOST", "6777", "ENE0061_EDF_Barometre_mobilite_2024", "Int"],
  ["TCT1334_ORANGE_Concurrence2023_Recrutement_Boost", "0", "TCT1334_B", "Int"],
  ["ENO202402_ENOV_FlashConso_Fevrier", "0", "ENO202402_ENOV_FlashConso_Fevrier", "Int"],
  ["TCT1334_ORANGE_CONCURRENCE_B&YOU", "30", "TCT1334_ORANGE_Concurrence_2023_ENOV", "Int"],
  ["TCT1334_ORANGE_CONCURRENCE_JEUNES", "63", "TCT1334_ORANGE_Concurrence_2023_ENOV", "Int"],
  ["ENE0061_EDF_Barometre_mobilite_MAIN - BASE 2023", "4663", "ENE0061_EDF_Barometre_mobilite_2024", "Int"],
  ["", "", "", ""],
];
const listRows = lists.map(([name, count, target, state, status]) => [
  [<ListIcon key="i" status={status} />, name], count, target, state,
]);

function FilterPopup() {
  const [mode, setMode] = useState("custom");
  const [value, setValue] = useState("1400");
  const radio = "size-[13px] appearance-none rounded-full border border-[#7a7a7a] bg-white checked:border-4 checked:border-[#0067c0]";
  const button = "h-[22px] rounded-[3px] border bg-[#fdfdfd]";

  return (
    <form
      className="absolute top-[59px] left-[339px] flex w-[416px] flex-col border border-[#6b6b6b] bg-[#f0f0f0] px-[11px] pt-[13px] pb-[11px] text-[10px] text-black shadow-[3px_3px_3px_rgba(0,0,0,0.45)]"
      onSubmit={(e) => e.preventDefault()}
    >
      <label className="flex h-4 items-center gap-0.5">
        <input type="radio" name="filter" className={radio} checked={mode === "custom"} onChange={() => setMode("custom")} />
        Filtre personnalisé
      </label>
      <label htmlFor="operator" className="mt-1 ml-6 h-4 leading-4">Afficher les élements:</label>
      <div className="mt-[5px] ml-6 flex gap-[7px]">
        <div className="relative">
          <select id="operator" className="h-[21px] w-[116px] appearance-none rounded-[2px] border border-[#cfcfcf] bg-[#fdfdfd] pl-[3px]">
            <option>Contient...</option>
            <option>Commence par...</option>
          </select>
          <Chevron className="pointer-events-none absolute top-1.5 right-1" />
        </div>
        <div className="flex h-[22px] grow items-center rounded-[2px] border border-[#8a8a8a] bg-white pr-1 pl-1">
          <input
            aria-label="Valeur"
            className="w-full grow outline-none selection:bg-[#0078d7] selection:text-white"
            value={value}
            autoFocus
            onFocus={(e) => e.target.select()}
            onChange={(e) => setValue(e.target.value)}
          />
          <Chevron />
        </div>
      </div>
      <label className="mt-[17px] flex h-4 items-center gap-0.5">
        <input type="radio" name="filter" className={radio} checked={mode === "item"} onChange={() => setMode("item")} />
        Filtre d'élément
      </label>
      <div className="mt-[3px] ml-[25px] h-[169px] border border-[#828790] bg-white p-px">
        <table className="w-full table-fixed border-separate border-spacing-0 text-left">
          <thead>
            <tr className="h-[25px]">
              <th className="w-[185px] border-r border-[#e5e5e5] py-0 pl-[5px] font-normal">Item</th>
              <th className="w-[83px] border-r border-[#e5e5e5] p-0 text-center font-normal">Visible</th>
              <th />
            </tr>
          </thead>
          <tbody>
            <tr><td colSpan={3} className="border-t-8 border-[#f0f0f0] p-0 text-center leading-3">Rien à afficher.</td></tr>
          </tbody>
        </table>
      </div>
      <div className="mt-[19px] flex justify-end gap-[7px]">
        <button type="button" className={`${button} w-[83px] border-[#d0d0d0]`}>Supprimer Filtre</button>
        <button type="submit" className={`${button} w-[74px] border-[#0078d4]`}>OK</button>
        <button type="button" className={`${button} w-[74px] border-[#d0d0d0]`}>Annuler</button>
      </div>
    </form>
  );
}

function Workspace() {
  return (
    <main className="relative grow overflow-hidden border-2 border-t border-r-[#d8d8d8] border-b-0 border-l-[#8a8a8a] border-t-[#606060] bg-[#ababab]">
      <div className="absolute -inset-x-0.5 -top-px bottom-0">
        <ChildWindow title="" icon={null} className="top-0.5 right-0.5 left-[969px] h-[865px]">
          <div className="flex min-h-0 grow">
            <DataTable label="Listes" columns={listColumns} rows={listRows} />
            <VerticalScroll thumb="h-[61px]" />
          </div>
          <HorizontalScroll thumb="w-[543px]" grip />
        </ChildWindow>
        <ChildWindow title="Enquêteur(s)" icon={<span className="mr-1"><AgentIcon size={14} /></span>} className="top-[579px] left-0.5 h-[288px] w-[958px]">
          <div className="flex min-h-0 grow">
            <DataTable label="Enquêteurs" columns={agentColumns} rows={agentRows} />
            <VerticalScroll thumb="h-[17px]" />
          </div>
          <HorizontalScroll thumb="w-[415px]" grip />
        </ChildWindow>
        <ChildWindow title="Enquêtes <Filtres Actif>" icon={<ClipboardIcon size={16} />} className="top-0.5 left-0.5 h-[561px] w-[1397px] shadow-[1px_1px_2px_rgba(0,0,0,0.4)]">
          <div className="flex min-h-0 grow">
            <DataTable label="Enquêtes" columns={surveyColumns} rows={surveyRows} />
          </div>
          <HorizontalScroll thumb="w-[1050px]" />
        </ChildWindow>
        <FilterPopup />
      </div>
    </main>
  );
}

/* ---------- Task bar ---------- */

const ChromeShape = () => (
  <>
    <circle cx="12" cy="12" r="12" fill="#fbc116" />
    <path d="M1.600 6A12 12 0 0122.400 6H12a6 6 0 00-5.600 4z" fill="#e33b2e" />
    <path d="M1.600 6a12 12 0 0010.400 18l5.200-9A6 6 0 016.800 15z" fill="#27a043" />
    <circle cx="12" cy="12" r="5.600" fill="#fff" />
    <circle cx="12" cy="12" r="4.500" fill="#2f7bed" />
  </>
);

const WifiShape = () => (
  <>
    <path d="M1 9c6-6.500 16-6.500 22 0" stroke="#2496d8" strokeWidth="3" />
    <path d="M5 13.500c4-4 10-4 14 0" stroke="#30a8ee" strokeWidth="3" />
    <path d="M8.500 17c2-2 5-2 7 0" stroke="#3cb8fa" strokeWidth="2.600" />
    <circle cx="12" cy="20" r="2" fill="#3cb8fa" />
  </>
);

const tasks = [
  { name: "Explorateur", dot: true, art: <><path d="M0 3c0-1 .5-1.500 1.500-1.500H9l2 3h13V8H0z" fill="#d99a12" /><path d="M0 5.500h24V21c0 1-.5 1.500-1.500 1.500h-21C.5 22.500 0 22 0 21z" fill="#fcd04b" /><path d="M4.500 22.500V18c0-1.500 1-2 2-2h11c1 0 2 .5 2 2v4.500z" fill="#1d72c4" /><path d="M7 19h10" stroke="#104f92" strokeWidth="1.300" /></> },
  { name: "Edge", dot: true, art: <><path d="M0 12C0 4 6 0 12 0c7 0 12 4 12 9.500 0 4-3 6-6.500 6-2.500 0-3.500-1-3-2 1-3-1-5.500-4-5.500C5 8 1 11 0 15z" fill="#37bfa5" /><path d="M2 7C5 0 15-1.500 20 3c-5-2-14-2-18 4z" fill="#4fd0d8" /><path d="M1 14c1-4 4-6.500 8-6.500 2 0 4 1 4.500 3-6 0-5 10 4 9.500 2 0 4-1 5-2-2 4-6 6-10 6C6 24 1 20 1 14z" fill="#1663b6" /><path d="M0 17h13v7H0z" fill="#b8701c" /><path d="M4.500 17v-1.500h4V17M0 20h13" stroke="#7c4408" /><path d="M5.500 19h2v2.500h-2z" fill="#f7d774" /></> },
  { name: "Store", art: <><path d="M8 6V2.500h8V6" stroke="#2fb6ee" strokeWidth="2" /><path d="M.5 6h23v15c0 1.500-1 2.500-2.500 2.500H3C1.500 23.500.5 22.500.5 21z" fill="#1d4b86" /><path d="M8 10h4v4H8z" fill="#f25022" /><path d="M12.500 10h4v4h-4z" fill="#7fba00" /><path d="M8 15h4v4H8z" fill="#00a4ef" /><path d="M12.500 15h4v4h-4z" fill="#ffb900" /></> },
  { name: "Chrome", art: <ChromeShape /> },
  { name: "Serveurs", art: <><path d="M1 6l8-4 5 2v17l-6 2-7-2z" fill="#16aebc" /><path d="M12 11l6-3 5 2v11l-6 2-5-2z" fill="#22c4cc" /><path d="M3 9l5 1M3 12l5 1M3 15l5 1M3 18l5 1M10 9l3-1M10 12l3-1M10 15l2-1M14 13l3 1M14 16l3 1M14 19l3 1" stroke="#bff2f2" strokeWidth="1.300" /></> },
  { name: "Outlook", dot: true, alert: true, art: <><path d="M7 6h16v16H7z" fill="#1a7fd6" /><path d="M7 12l8 6 8-6v10H7z" fill="#49b3f2" /><path d="M0 7h12v12H0z" fill="#0f5fb4" /><circle cx="6" cy="13" r="3" stroke="#fff" strokeWidth="1.800" /></> },
  { name: "Superviseur", active: true, art: null },
  { name: "Diamant", art: <><path d="M7 6h10l4 5-9 9-9-9z" fill="#1d9bf5" /><path d="M7 6h5l-3 5H3zM12 20l-3-9h6z" fill="#55c4fb" /><path d="M17 6l4 5h-6z" fill="#1277d6" /></> },
  { name: "To Do", art: <><path d="M0 12l4-4 6 6-4 4z" fill="#1a54b0" /><path d="M5.500 17.500L20 3l4 4L9.500 21.500z" fill="#3f9df0" /></> },
  { name: "Bureau à distance", art: <><path d="M0 0h24v24H0z" fill="#0b72d4" /><circle cx="12" cy="12" r="11.500" fill="#fff" /><circle cx="12" cy="12" r="10.300" fill="#d5400f" /><path d="M7 9.500l4 3.500-4 4M17 6.500l-4 3.500 4 4" stroke="#fff" strokeWidth="2" /></> },
  { name: "XAMPP", art: <><rect width="24" height="24" rx="3" fill="#ee7420" /><path d="M7 6c-3 0-3 5 0 5.500C4 12 4 18 7 18h2.500c1 0 1-2.500 2.500-2.500s1.500 2.500 2.500 2.500H17c3 0 3-6 0-6.500C20 11 20 6 17 6h-2.500c-1.500 0-1 2.500-2.500 2.500S11 6 9.500 6z" stroke="#fff" strokeWidth="3" /></> },
  { name: "Chrome 2", dot: true, art: <ChromeShape /> },
  { name: "Wi-Fi", dot: true, art: <WifiShape /> },
  { name: "PowerShell", dot: true, art: <><path d="M4.500 2.500h19l-3.500 14H.5z" fill="#1aa0bd" /><path d="M1 16.500h19l-1 5H0z" fill="#b7c0c6" /><path d="M7 5.500l4.500 4-6 4M12 13h5" stroke="#fff" strokeWidth="1.800" /><path d="M11 19h6" stroke="#48525a" /></> },
  { name: "Bloc-notes", dot: true, art: <><path d="M3 2h18v19H3z" fill="#42c3e6" /><path d="M3 21h18v2H3z" fill="#a5541a" /><path d="M5 0v3M8 0v3M11 0v3M14 0v3M17 0v3" stroke="#175f80" strokeWidth="1.500" /><path d="M6.500 7h11M6.500 11.500h11M6.500 16h11" stroke="#0f5d85" strokeWidth="1.800" /></> },
  { name: "Teams", dot: true, badge: "9+", art: <><circle cx="14" cy="5" r="4" fill="#7b83eb" /><path d="M8 9h15v8a6 6 0 01-8 5.500c-4 0-7-3-7-6z" fill="#6a72dc" /><path d="M0 7h12v12H0z" fill="#4b53bc" /><path d="M3 10h6M6 10v6.500" stroke="#fff" strokeWidth="1.800" /></> },
  { name: "Invite de commandes", dot: true, art: <><path d="M1 2h22v19H1z" fill="#0a0a0a" stroke="#a7adb3" /><path d="M1 3h22" stroke="#d5d9dd" strokeWidth="2" /><path d="M6 6.500H3.500v3H6M8 6v1.500M8 9v1M10 6l1.500 4M13.500 6.500v3M16 10h4" stroke="#eee" /></> },
  { name: "Acrobat", dot: true, art: <><path d="M1 1h22v20.500H1z" fill="#fbfbfb" stroke="#c3c3c3" /><path d="M12 5c1.500 0 0 5-2 8-2 3-4 4.500-5 4-.5-1.500 3-3.500 7-4 4-.5 7 .5 6.500 2-1 1-4-.5-5.500-3-1.500-2.500-2-7-1-7z" stroke="#e22424" strokeWidth="1.500" /></> },
  { name: "Excel", dot: true, art: <><path d="M6 1h18v21H6z" fill="#21a366" /><path d="M15 1h9v7h-9z" fill="#33c481" /><path d="M6 15h18v7H6z" fill="#185c37" /><path d="M15 8h9v7h-9z" fill="#107c41" /><path d="M0 6h12v12H0z" fill="#0f703b" /><path d="M3.500 9l5 6.500M8.500 9l-5 6.500" stroke="#fff" strokeWidth="1.800" /></> },
  { name: "Greenshot", dot: true, art: <><rect x="2" y="2" width="20" height="20" rx="4" fill="#3a1180" /><path d="M2 15h20v3a4 4 0 01-4 4H6a4 4 0 01-4-4z" fill="#220660" /><path d="M15.500 8.500c-3-2.500-8-1-8 3.500s5 5.500 8 3V12H12" stroke="#f1e8ff" strokeWidth="2.200" /><path d="M15 14l2 4" stroke="#f1e8ff" strokeWidth="1.800" /><path d="M5 6h1M18 6h1M18 10h1M6 17h1" stroke="#c8a4ff" /></> },
];

function TaskButton({ task }) {
  return (
    <button aria-label={task.name} className="flex w-11 justify-center">
      <span className={`relative flex h-[39px] w-10 flex-col items-center rounded-[4px] pt-[7px] ${task.active ? "bg-[#ecf0f5]" : ""} ${task.alert ? "bg-[#fbe3e5]" : ""}`}>
        {task.active ? <SupervisorIcon size={24} /> : <Svg size={24} box={24}>{task.art}</Svg>}
        {task.dot && <span className={`mt-[4px] h-[3px] w-1.5 rounded-full ${task.alert ? "bg-[#c42b1c]" : "bg-[#7d868f]"}`} />}
        {task.active && <span className="mt-[4px] h-[3px] w-4 rounded-full bg-[#0a72d0]" />}
        {task.badge && <span className="absolute top-0.5 right-0.5 size-4 rounded-full bg-[#c42b1c] text-center text-[10px] leading-4 text-white">{task.badge}</span>}
        {task.alert && (
          <span className="absolute top-0.5 right-[3px] flex size-4 items-center justify-center rounded-full bg-[#0b5cad]">
            <Svg size={10} box={10}><path d="M.5 1.500h9v7h-9zM.5 2l4.500 4 4.500-4" stroke="#fff" /></Svg>
          </span>
        )}
      </span>
    </button>
  );
}

function TaskBar() {
  return (
    <footer className="grid h-12 shrink-0 grid-cols-[1fr_auto_1fr] border-t border-[#abb6c3] bg-linear-to-r from-[#cfe3ee] via-[#d9dde6] via-55% to-[#d0e0ec]">
      <div />
      <div className="flex items-center">
        <button aria-label="Démarrer" className="flex w-11 justify-center">
          <Svg size={23} box={23}><path d="M0 0h11v11H0zM12 0h11v11H12zM0 12h11v11H0zM12 12h11v11H12z" fill="#0f83dc" /><path d="M0 0h11v11H0z" fill="#35b0f2" /></Svg>
        </button>
        <label className="mx-[3px] flex h-[31px] w-[218px] items-center gap-2.5 rounded-full border border-[#c3d0dd] border-b-[#a9b6c4] bg-[#f2f7fb] pl-2.5">
          <Svg size={15} box={15}><circle cx="6" cy="6" r="5" stroke="#222" strokeWidth="1.700" /><path d="M9.700 9.700l4.500 4.500" stroke="#222" strokeWidth="1.700" /></Svg>
          <input type="search" aria-label="Rechercher" placeholder="Rechercher" className="w-full text-[13px] outline-none placeholder:text-[#5b6066]" />
        </label>
        {tasks.map((t) => <TaskButton key={t.name} task={t} />)}
      </div>
      <div className="flex items-center justify-end pr-5 text-[#1c1c1c]">
        <Svg size={12} box={12}><path d="M1 9l5-5 5 5" stroke="currentColor" strokeWidth="1.400" /></Svg>
        <Svg size={16} className="ml-[18px]"><path d="M3.500 13a3.500 3.500 0 01-.5-7 5 5 0 019-.5 4 4 0 01.5 7.500z" fill="#0f6cc9" /><path d="M5 13c2-4 6-5 8.500-5.500 3 .5 3.500 5.500-.5 5.500z" fill="#33a9ee" /></Svg>
        <Svg size={16} className="ml-4"><rect x="5.500" y="0.800" width="5" height="9" rx="2.500" stroke="#1f57a8" strokeWidth="1.300" /><path d="M3 7c0 7 10 7 10 0M8 12.500V16" stroke="#1f57a8" strokeWidth="1.300" /></Svg>
        <Svg size={16} className="ml-4"><path d="M1 6.500c4-4 10-4 14 0" stroke="#a9b4bf" strokeWidth="1.300" /><path d="M3 8.800c3-3 7-3 10 0M5 11c2-2 4-2 6 0" stroke="currentColor" strokeWidth="1.300" /><circle cx="8" cy="13" r="1.300" fill="currentColor" /></Svg>
        <Svg size={16} className="ml-2"><path d="M1 6h2.500L7 3v10L3.500 10H1z" stroke="currentColor" /><path d="M9 6c1 1 1 3 0 4M11 4.500c2 2 2 5 0 7M13 3c3 3 3 7 0 10" stroke="currentColor" strokeWidth="1.100" /></Svg>
        <Svg size={16} className="ml-2"><rect x="2.500" y="4.500" width="11" height="8" rx="1.500" stroke="currentColor" /><rect x="4" y="6" width="8" height="5" fill="currentColor" /><path d="M15 7v3" stroke="currentColor" strokeWidth="1.500" /><path d="M3.500 0L0 5h2L1 9l4-5H3z" fill="currentColor" stroke="#d0e0ec" strokeWidth="0.600" /></Svg>
        <div className="ml-[19px] text-right text-[11px] leading-4">
          <time className="block">12:07</time>
          <time className="block">03/02/2025</time>
        </div>
        <Svg size={16} className="ml-2"><path d="M2 12V7c0-8 12-8 12 0v5l1 1H1zM6 14h4c0 2-4 2-4 0z" fill="currentColor" /><path d="M5.500 5.500h4l-4 5h4" stroke="#d0e0ec" strokeWidth="1.200" /><path d="M12.500.800h3l-3 3.500h3" stroke="currentColor" /></Svg>
      </div>
    </footer>
  );
}

function App() {
  return (
    <div className="flex h-screen flex-col overflow-hidden bg-white font-['Noto_Sans',sans-serif] text-black">
      <TitleArea />
      <Ribbon />
      <Workspace />
      <div className="flex h-[26px] shrink-0 items-center justify-between border-t border-[#cdcdcd] bg-[#f0f0f0] pt-0.5 pl-0.5 text-[11px]">
        <span>Prêt</span>
        <SizeGrip className="mt-3 mr-1" />
      </div>
      <TaskBar />
    </div>
  );
}

export default App;
